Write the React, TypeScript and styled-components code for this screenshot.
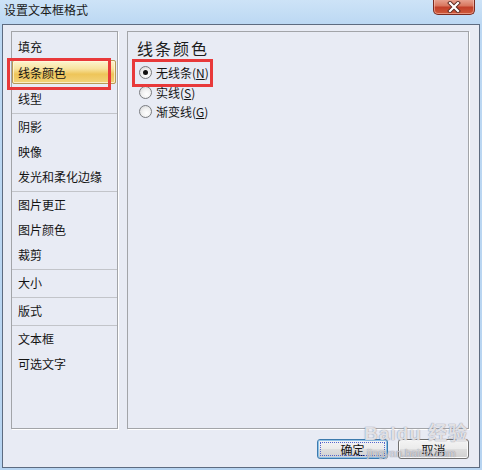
import React from "react";
import styled, { createGlobalStyle } from "styled-components";

const Global = createGlobalStyle`
  html, body { margin: 0; padding: 0; background: #bcd8f3; }
  body { font-family: "Noto Sans CJK SC", "Liberation Sans", sans-serif; }
`;

const Window = styled.div`
  position: relative;
  width: 482px;
  height: 470px;
  box-sizing: border-box;
  padding: 0 2px 2px 2px;
  display: flex;
  flex-direction: column;
  background: linear-gradient(180deg, #cde3f7 0px, #bcd8f3 24px, #b7d4f1 100%);
  overflow: hidden;
`;

const TitleBar = styled.div`
  height: 24px;
  display: flex;
  justify-content: space-between;
  align-items: flex-start;
  padding-left: 2px;
  padding-right: 5px;
`;

const Title = styled.div`
  font-size: 12px;
  line-height: 20px;
  color: #1a1a1a;
`;

const CloseButton = styled.div`
  width: 42px;
  height: 16px;
  box-sizing: border-box;
  margin-top: -1px;
  border: 1px solid #7b2a1f;
  border-top: none;
  border-radius: 0 0 5px 5px;
  background: linear-gradient(180deg, #e9a796 0%, #d8775f 45%, #c2402a 55%, #cf5a3a 100%);
  box-shadow: inset 0 0 0 1px rgba(255, 210, 200, 0.5);
  display: flex;
  align-items: center;
  justify-content: center;
`;

const Client = styled.div`
  flex: 1;
  display: flex;
  flex-direction: column;
  border: 1px solid #5d6b80;
  background: #e8ebf4;
  padding: 6px 10px 8px 8px;
`;

const Body = styled.div`
  display: flex;
  gap: 9px;
  height: 398px;
`;

const Panel = styled.div<{ $w: number }>`
  width: ${(p) => p.$w}px;
  box-sizing: border-box;
  height: 100%;
  border: 1px solid #a2a4a8;
  box-shadow: 1px 1px 0 #ffffff;
  background: #e8ebf4;
`;

const Group = styled.div<{ $first?: boolean }>`
  padding-top: ${(p) => (p.$first ? 1 : 0)}px;
  padding-bottom: 2px;
  border-bottom: 1px solid #c2c4c9;
  &:last-child { border-bottom: none; }
`;

const Item = styled.div<{ $h: number }>`
  height: ${(p) => p.$h}px;
  display: flex;
  align-items: center;
`;

const ItemBox = styled.div<{ $selected?: boolean }>`
  flex: 1;
  height: 22px;
  margin: 0 1px 0 0;
  padding-left: 5px;
  display: flex;
  align-items: center;
  font-size: 12px;
  color: #141414;
  border: 1px solid ${(p) => (p.$selected ? "#b99a55" : "transparent")};
  border-radius: 2px;
  background: ${(p) =>
    p.$selected
      ? "linear-gradient(180deg, #fdf4cf 0%, #f8e3a0 35%, #eec559 60%, #f2d37a 100%)"
      : "transparent"};
  box-shadow: ${(p) => (p.$selected ? "inset 0 0 0 1px rgba(255,250,225,0.7)" : "none")};
`;

const RightInner = styled.div`
  padding: 6px 0 0 9px;
`;

const Heading = styled.div`
  font-size: 16px;
  line-height: 20px;
  letter-spacing: 2px;
  color: #1c1c1c;
`;

const RadioList = styled.div`
  margin-top: 5px;
  padding-left: 2px;
  display: flex;
  flex-direction: column;
`;

const RadioRow = styled.div`
  height: 19.5px;
  display: flex;
  align-items: center;
  gap: 4px;
  font-size: 12px;
  color: #141414;
`;

const RadioCircle = styled.span<{ $checked?: boolean }>`
  width: 13px;
  height: 13px;
  box-sizing: border-box;
  border-radius: 50%;
  border: 1px solid #7a7c80;
  background: radial-gradient(circle at 60% 65%, #ffffff 0%, #f1f1f1 45%, #cfd0d3 100%);
  display: flex;
  align-items: center;
  justify-content: center;
  &::after {
    content: "";
    display: ${(p) => (p.$checked ? "block" : "none")};
    width: 5px;
    height: 5px;
    border-radius: 50%;
    background: #111;
  }
`;

const U = styled.span`
  text-decoration: underline;
`;

const Footer = styled.div`
  margin-top: 10px;
  display: flex;
  justify-content: flex-end;
  gap: 10px;
`;

const Button = styled.div<{ $default?: boolean }>`
  position: relative;
  width: 71px;
  height: 20px;
  box-sizing: border-box;
  border: 1px solid ${(p) => (p.$default ? "#3d7bad" : "#707070")};
  border-radius: 3px;
  background: linear-gradient(180deg, #f4f4f4 0%, #ebebeb 48%, #dddddd 52%, #d0d0d0 100%);
  display: flex;
  align-items: center;
  justify-content: center;
  font-size: 12px;
  color: #111;
  box-shadow: ${(p) => (p.$default ? "inset 0 0 0 1px #8ec2ea" : "inset 0 0 0 1px #fbfbfb")};
  &::before {
    content: "";
    display: ${(p) => (p.$default ? "block" : "none")};
    position: absolute;
    inset: 2px;
    border: 1px dotted #5566cc;
  }
`;

const Annotation = styled.div<{ $x: number; $y: number; $w: number; $h: number }>`
  position: absolute;
  left: ${(p) => p.$x}px;
  top: ${(p) => p.$y}px;
  width: ${(p) => p.$w}px;
  height: ${(p) => p.$h}px;
  box-sizing: border-box;
  border: 3px solid #e8393a;
  pointer-events: none;
`;

const Watermark = styled.div`
  position: absolute;
  left: 364px;
  top: 423px;
  display: flex;
  flex-direction: column;
  align-items: flex-start;
  color: rgba(255, 255, 255, 0.75);
  text-shadow: 0 0 1px rgba(110, 110, 130, 0.7), 0 0 1px rgba(110, 110, 130, 0.5);
  pointer-events: none;
  font-family: "Liberation Sans", "Noto Sans CJK SC", sans-serif;
`;

const WatermarkTop = styled.div`
  font-size: 19px;
  font-weight: bold;
  line-height: 22px;
  letter-spacing: 1px;
`;

const WatermarkSub = styled.div`
  font-size: 11px;
  line-height: 12px;
  margin-top: 2px;
  margin-left: 3px;
  color: rgba(255, 255, 255, 0.6);
`;

const groups: { items: string[]; h: number; first?: boolean }[] = [
  { items: ["填充", "线条颜色", "线型"], h: 26, first: true },
  { items: ["阴影", "映像", "发光和柔化边缘"], h: 25 },
  { items: ["图片更正", "图片颜色", "裁剪"], h: 25 },
  { items: ["大小"], h: 25 },
  { items: ["版式"], h: 25 },
  { items: ["文本框", "可选文字"], h: 25 },
];

export default function App() {
  return (
    <>
      <Global />
      <Window>
        <TitleBar>
          <Title>设置文本框格式</Title>
          <CloseButton>
            <svg width="14" height="12" viewBox="0 0 14 12">
              <path
                d="M3 2 L11 10 M11 2 L3 10"
                stroke="#5a2a22"
                strokeWidth="4"
                strokeLinecap="square"
                fill="none"
              />
              <path
                d="M3 2 L11 10 M11 2 L3 10"
                stroke="#ffffff"
                strokeWidth="2.2"
                strokeLinecap="square"
                fill="none"
              />
            </svg>
          </CloseButton>
        </TitleBar>
        <Client>
          <Body>
            <Panel $w={107}>
              {groups.map((g, gi) => (
                <Group key={gi} $first={g.first}>
                  {g.items.map((it) => (
                    <Item key={it} $h={g.h}>
                      <ItemBox $selected={it === "线条颜色"}>{it}</ItemBox>
                    </Item>
                  ))}
                </Group>
              ))}
            </Panel>
            <Panel $w={342}>
              <RightInner>
                <Heading>线条颜色</Heading>
                <RadioList>
                  <RadioRow>
                    <RadioCircle $checked />
                    <span>
                      无线条(<U>N</U>)
                    </span>
                  </RadioRow>
                  <RadioRow>
                    <RadioCircle />
                    <span>
                      实线(<U>S</U>)
                    </span>
                  </RadioRow>
                  <RadioRow>
                    <RadioCircle />
                    <span>
                      渐变线(<U>G</U>)
                    </span>
                  </RadioRow>
                </RadioList>
              </RightInner>
            </Panel>
          </Body>
          <Footer>
            <Button $default>确定</Button>
            <Button>取消</Button>
          </Footer>
        </Client>
        <Annotation $x={7} $y={58} $w={104} $h={32} />
        <Annotation $x={132} $y={59} $w={81} $h={28} />
        <Watermark>
          <WatermarkTop>Baidu 经验</WatermarkTop>
          <WatermarkSub>jingyan.baidu.com</WatermarkSub>
        </Watermark>
      </Window>
    </>
  );
}
